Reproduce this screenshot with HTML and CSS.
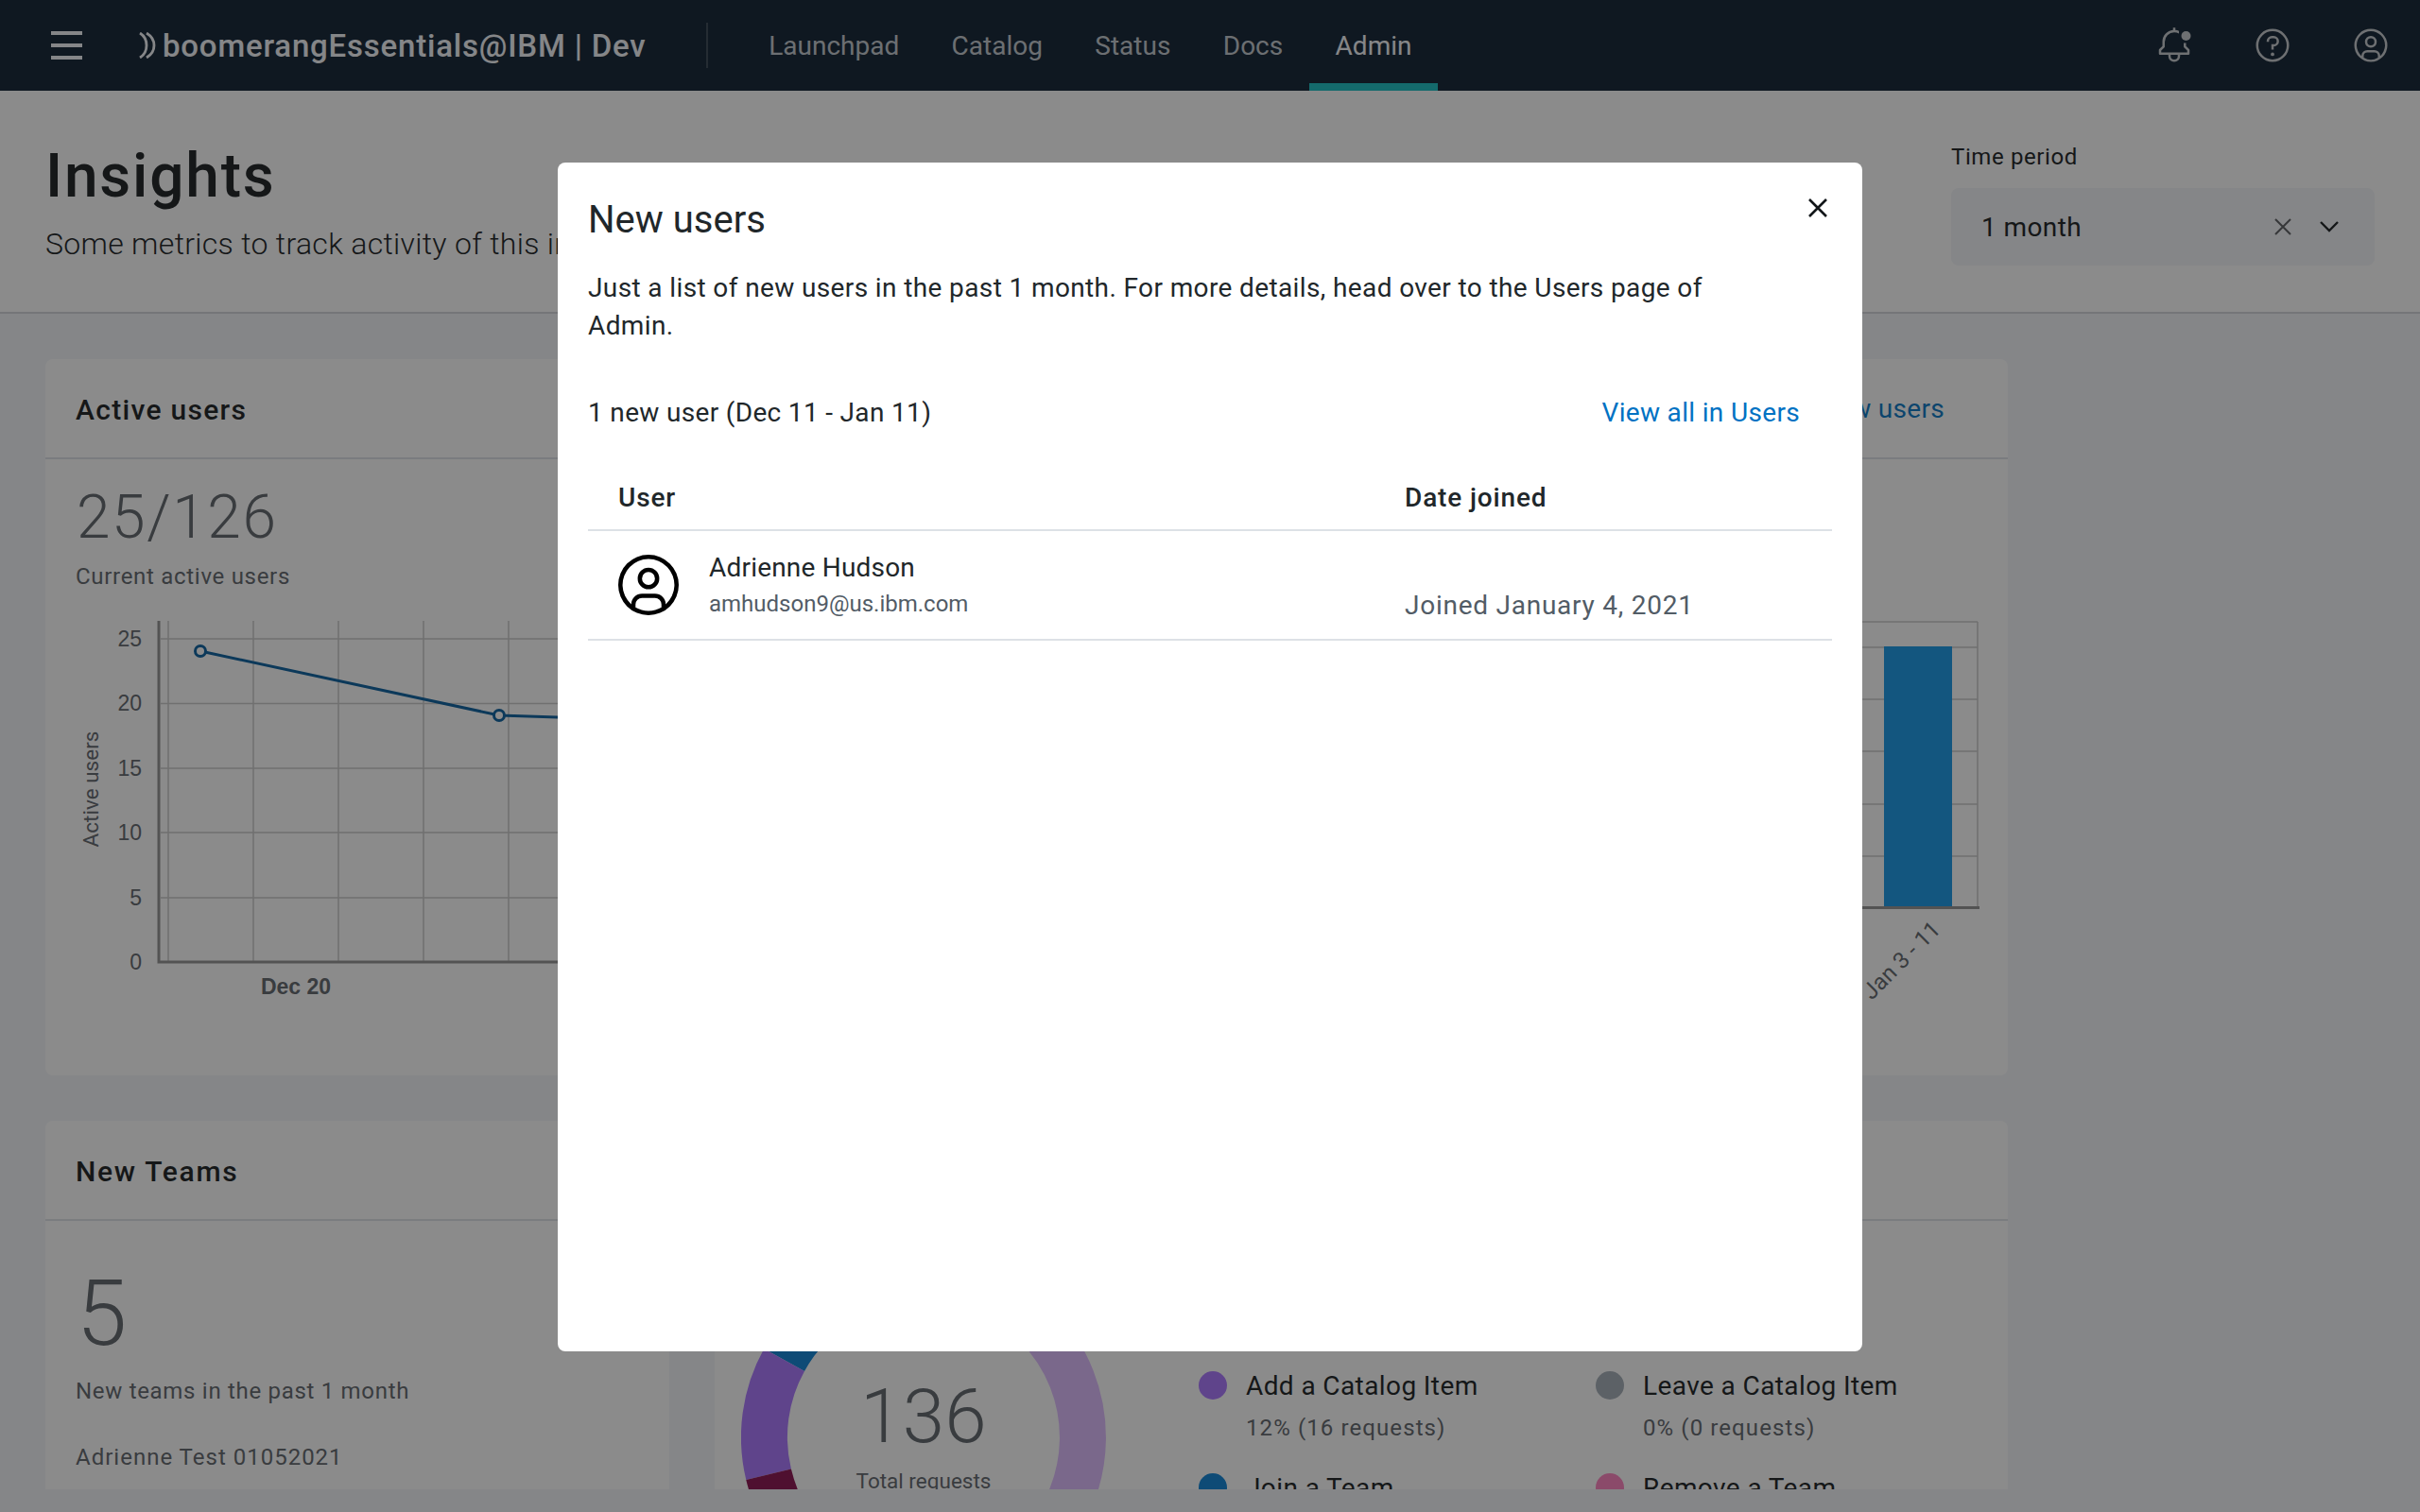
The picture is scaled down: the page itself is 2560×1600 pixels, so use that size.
FILE: index.html
```html
<!DOCTYPE html>
<html lang="en">
<head>
    <meta charset="UTF-8">
    <title>Insights - boomerangEssentials@IBM</title>
    <link rel="stylesheet" href="styles.css">
</head>
<body>
    <header class="topbar">
        <button class="menu-btn" aria-label="Menu"><span></span><span></span><span></span></button>
        <div class="brand">
            <svg class="brand-mark" viewBox="0 0 20 28" fill="none" stroke="currentColor" stroke-width="2.8">
                <path d="M2 1c5 3 7 8 7 13s-2 10-7 13"/>
                <path d="M9 1c5 3 8 8 8 13s-3 10-8 13"/>
            </svg>
            <span>boomerangEssentials@IBM | Dev</span>
        </div>
        <nav class="nav">
            <a href="#">Launchpad</a>
            <a href="#">Catalog</a>
            <a href="#">Status</a>
            <a href="#">Docs</a>
            <a href="#" class="active">Admin</a>
        </nav>
        <div class="topbar-icons">
            <svg viewBox="0 0 32 32"><path d="M26 16.59V14h-2v3a1 1 0 0 0 .29.71L27 20.41V22H5v-1.59l2.71-2.71A1 1 0 0 0 8 17v-4a8 8 0 0 1 8-8 7.9 7.9 0 0 1 4 1.09V3.82a9.88 9.88 0 0 0-3-.77V1h-2v2.05A10 10 0 0 0 6 13v3.59l-2.71 2.7A1 1 0 0 0 3 20v3a1 1 0 0 0 1 1h7v1a5 5 0 0 0 10 0v-1h7a1 1 0 0 0 1-1v-3a1 1 0 0 0-.29-.71zM19 25a3 3 0 0 1-6 0v-1h6z"/><circle cx="26" cy="8" r="4"/></svg>
            <svg viewBox="0 0 32 32"><path d="M16 2a14 14 0 1 0 14 14A14 14 0 0 0 16 2zm0 26a12 12 0 1 1 12-12 12 12 0 0 1-12 12z"/><circle cx="16" cy="23.5" r="1.5"/><path d="M17 8h-1.5a4.49 4.49 0 0 0-4.5 4.5v.5h2v-.5a2.5 2.5 0 0 1 2.5-2.5H17a2.5 2.5 0 0 1 0 5h-2v4.5h2V17a4.5 4.5 0 0 0 0-9z"/></svg>
            <svg viewBox="0 0 32 32"><path d="M16 8a5 5 0 1 0 5 5 5 5 0 0 0-5-5zm0 8a3 3 0 1 1 3-3 3.003 3.003 0 0 1-3 3z"/><path d="M16 2a14 14 0 1 0 14 14A14.016 14.016 0 0 0 16 2zm-6 24.377V25a3.003 3.003 0 0 1 3-3h6a3.003 3.003 0 0 1 3 3v1.377a11.899 11.899 0 0 1-12 0zm13.992-1.451A5.002 5.002 0 0 0 19 20h-6a5.002 5.002 0 0 0-4.992 4.926 12 12 0 1 1 15.985 0z"/></svg>
        </div>
    </header>

    <section class="page-head">
        <div>
            <h1>Insights</h1>
            <p class="page-sub">Some metrics to track activity of this instance</p>
        </div>
        <div class="period">
            <label class="period-label">Time period</label>
            <div class="select">
                <span>1 month</span>
                <svg class="select-clear" viewBox="0 0 18 18"><path d="M1 1l16 16M17 1L1 17"/></svg>
                <svg class="select-chevron" viewBox="0 0 20 12"><path d="M1 1l9 9 9-9"/></svg>
            </div>
        </div>
    </section>

    <main class="dashboard">
        <section class="card">
            <div class="card-head">
                <h2>Active users</h2>
                <a href="#" class="card-link">View new users</a>
            </div>
            <div class="active-body">
                <div>
                    <div class="stat">25/126</div>
                    <div class="stat-label">Current active users</div>
                    <svg class="line-chart" viewBox="81 640 540 430">
                        <g class="grid">
                            <path d="M170 676H621M170 744.5H621M170 813H621M170 881H621M170 950H621"/>
                            <path d="M178 657V1018M268 657V1018M358 657V1018M448 657V1018M538 657V1018"/>
                        </g>
                        <path class="axis" d="M168 657V1018H621"/>
                        <path class="series" d="M212 689L528 757L621 760"/>
                        <circle class="dot" cx="212" cy="689" r="5.5"/>
                        <circle class="dot" cx="528" cy="757" r="5.5"/>
                        <g class="ticks">
                            <text x="150" y="684">25</text>
                            <text x="150" y="752">20</text>
                            <text x="150" y="821">15</text>
                            <text x="150" y="889">10</text>
                            <text x="150" y="958">5</text>
                            <text x="150" y="1026">0</text>
                        </g>
                        <text class="tick-bold" x="313" y="1052">Dec 20</text>
                        <text class="axis-title" transform="translate(104 835) rotate(-90)">Active users</text>
                    </svg>
                </div>
                <svg class="bar-chart" viewBox="1824 640 300 430">
                    <path class="grid" d="M1824 684H2092M1824 739H2092M1824 794H2092M1824 850H2092M1824 905H2092M1824 657H2092M2092 657V959"/>
                    <rect class="bar" x="1993" y="683" width="72" height="276"/>
                    <path class="axis" d="M1824 959.5H2094"/>
                    <text class="bar-label" transform="translate(2054 984) rotate(-45)">Jan 3 - 11</text>
                </svg>
            </div>
        </section>

        <div class="row">
            <section class="card">
                <div class="card-head"><h2>New Teams</h2></div>
                <div class="teams-body">
                    <div class="stat-big">5</div>
                    <div class="stat-label">New teams in the past 1 month</div>
                    <div class="team-name">Adrienne Test 01052021</div>
                </div>
            </section>
            <section class="card">
                <div class="card-head"><h2>Requests</h2></div>
                <div class="requests-body">
                    <div class="donut">
                        <svg viewBox="0 0 386 386" fill="none">
                            <path class="seg-lavender" d="M193 24.5A168.5 168.5 0 0 1 193 361.5"/>
                            <path class="seg-blue" d="M193 24.5A168.5 168.5 0 0 0 45.6 111.1"/>
                            <path class="seg-purple" d="M45.6 111.1A168.5 168.5 0 0 0 29.1 232.3"/>
                            <path class="seg-maroon" d="M29.1 232.3A168.5 168.5 0 0 0 193 361.5"/>
                        </svg>
                        <div class="donut-center">
                            <div class="donut-total">136</div>
                            <div class="donut-label">Total requests</div>
                        </div>
                    </div>
                    <div class="legend">
                        <div class="legend-item">
                            <span class="swatch swatch-purple"></span>
                            <div><div class="legend-name">Add a Catalog Item</div><div class="legend-value">12% (16 requests)</div></div>
                        </div>
                        <div class="legend-item">
                            <span class="swatch swatch-gray"></span>
                            <div><div class="legend-name">Leave a Catalog Item</div><div class="legend-value">0% (0 requests)</div></div>
                        </div>
                        <div class="legend-item">
                            <span class="swatch swatch-blue"></span>
                            <div><div class="legend-name">Join a Team</div><div class="legend-value">9% (12 requests)</div></div>
                        </div>
                        <div class="legend-item">
                            <span class="swatch swatch-pink"></span>
                            <div><div class="legend-name">Remove a Team</div><div class="legend-value">2% (3 requests)</div></div>
                        </div>
                    </div>
                </div>
            </section>
        </div>
    </main>

    <div class="overlay">
        <div class="modal">
            <button class="modal-close" aria-label="Close">
                <svg viewBox="0 0 20 20"><path d="M1 1l18 18M19 1L1 19"/></svg>
            </button>
            <h3 class="modal-title">New users</h3>
            <p class="modal-text">Just a list of new users in the past 1 month. For more details, head over to the Users page of Admin.</p>
            <div class="modal-summary">
                <span>1 new user (Dec 11 - Jan 11)</span>
                <a href="#">View all in Users</a>
            </div>
            <div class="user-table">
                <div class="user-row user-row-head">
                    <div>User</div>
                    <div>Date joined</div>
                </div>
                <div class="user-row">
                    <div class="user-cell">
                        <svg class="avatar" viewBox="2 2 28 28"><path d="M16 8a5 5 0 1 0 5 5 5 5 0 0 0-5-5zm0 8a3 3 0 1 1 3-3 3.003 3.003 0 0 1-3 3z"/><path d="M16 2a14 14 0 1 0 14 14A14.016 14.016 0 0 0 16 2zm-6 24.377V25a3.003 3.003 0 0 1 3-3h6a3.003 3.003 0 0 1 3 3v1.377a11.899 11.899 0 0 1-12 0zm13.992-1.451A5.002 5.002 0 0 0 19 20h-6a5.002 5.002 0 0 0-4.992 4.926 12 12 0 1 1 15.985 0z"/></svg>
                        <div>
                            <div class="user-name">Adrienne Hudson</div>
                            <div class="user-email">amhudson9@us.ibm.com</div>
                        </div>
                    </div>
                    <div class="user-date">Joined January 4, 2021</div>
                </div>
            </div>
        </div>
    </div>
</body>
</html>
```

FILE: styles.css
```css
/* General */
* {
    box-sizing: border-box;
}

body {
    margin: 0;
    height: 1600px;
    overflow: hidden;
    font-family: Roboto, "Noto Sans", sans-serif;
    color: #121619;
    background: #f2f4f8;
}

h1, h2, h3, p {
    margin: 0;
    font-weight: 400;
}

a {
    color: #0072c3;
    text-decoration: none;
}

/* Top bar */
.topbar {
    display: flex;
    align-items: center;
    height: 96px;
    padding: 0 32px 0 54px;
    background: #07192b;
    color: #f2f4f8;
}

.menu-btn {
    display: flex;
    flex-direction: column;
    gap: 9px;
    width: 33px;
    padding: 0;
    border: 0;
    background: none;
}

.menu-btn span {
    height: 4px;
    background: #f2f4f8;
}

.brand {
    display: flex;
    align-items: center;
    gap: 6px;
    width: 660px;
    margin-left: 59px;
    font-size: 33px;
    font-weight: 500;
    letter-spacing: .8px;
}

.brand-mark {
    width: 20px;
    height: 28px;
}

.nav {
    display: flex;
    align-self: stretch;
    position: relative;
    margin-left: -59px;
    padding-left: 38.5px;
}

.nav::before {
    content: "";
    position: absolute;
    left: 0;
    top: 24px;
    bottom: 24px;
    border-left: 2px solid #33414f;
}

.nav a {
    display: flex;
    align-items: center;
    padding: 8px 27.7px 0;
    font-size: 28px;
    color: #c1c7cd;
    border-bottom: 8px solid transparent;
}

.nav a.active {
    color: #f2f4f8;
    border-bottom-color: #11bdc1;
}

.topbar-icons {
    display: flex;
    gap: 64px;
    margin-left: auto;
}

.topbar-icons svg {
    width: 40px;
    height: 40px;
    fill: #c5c9cd;
}

/* Page heading */
.page-head {
    display: flex;
    justify-content: space-between;
    height: 236px;
    padding: 53px 48px 0;
    background: #fff;
    border-bottom: 2px solid #d0d3d8;
}

h1 {
    font-size: 64px;
    line-height: 76px;
    font-weight: 500;
    letter-spacing: 1.8px;
}

.page-sub {
    margin-top: 13px;
    font-size: 32px;
    line-height: 40px;
    font-weight: 300;
    letter-spacing: .3px;
}

.period {
    width: 448px;
    margin-top: 1px;
}

.period-label {
    display: block;
    font-size: 24px;
    line-height: 32px;
    letter-spacing: .6px;
}

.select {
    display: flex;
    align-items: center;
    height: 82px;
    margin-top: 17px;
    padding: 0 38px 0 32px;
    border-radius: 8px;
    background: #f2f4f8;
    font-size: 28px;
    letter-spacing: .4px;
}

.select span {
    flex: 1;
}

.select svg {
    fill: none;
    stroke: #121619;
}

.select-clear {
    width: 18px;
    height: 18px;
    stroke-width: 2;
    margin-right: 30px;
    opacity: .7;
}

.select-chevron {
    width: 20px;
    height: 12px;
    stroke-width: 2.4;
}

/* Dashboard */
.dashboard {
    display: flex;
    flex-direction: column;
    gap: 48px;
    height: 1244px;
    width: 2124px;
    padding: 48px 0 0 48px;
    overflow: hidden;
}

.card {
    flex: none;
    background: #fff;
    border-radius: 8px 8px 0 0;
}

.dashboard > .card {
    height: 758px;
    border-radius: 8px;
}

.card-head {
    display: flex;
    justify-content: space-between;
    align-items: center;
    height: 106px;
    padding: 2px 67px 0 32px;
    border-bottom: 2px solid #dde1e6;
}

h2 {
    font-size: 30px;
    font-weight: 500;
    letter-spacing: 1.3px;
}

.row h2 {
    letter-spacing: 1.7px;
}

.card-link {
    margin-top: -1px;
    font-size: 28px;
    letter-spacing: .3px;
}

.active-body {
    display: flex;
    justify-content: space-between;
    padding-left: 32px;
}

.stat {
    margin: 26px 0 0 1px;
    font-size: 64px;
    line-height: 72px;
    font-weight: 300;
    letter-spacing: 1.6px;
    color: #5a6067;
}

.stat-label {
    margin-top: 10px;
    font-size: 24px;
    line-height: 32px;
    letter-spacing: .7px;
    color: #5a6067;
}

.line-chart {
    display: block;
    width: 540px;
    height: 430px;
    margin: 14px 0 0 1px;
}

.bar-chart {
    width: 300px;
    height: 430px;
    margin-top: 155px;
}

.grid path, path.grid {
    fill: none;
    stroke: #c8c8c8;
    stroke-width: 1.5;
}

.axis {
    fill: none;
    stroke: #8f8f8f;
    stroke-width: 3;
}

.series {
    fill: none;
    stroke: #005a9c;
    stroke-width: 3;
}

.dot {
    fill: #fff;
    stroke: #005a9c;
    stroke-width: 3;
}

.ticks text {
    font-family: "Liberation Sans", sans-serif;
    font-size: 23px;
    text-anchor: end;
    fill: #5a6067;
}

.tick-bold {
    font-family: "Liberation Sans", sans-serif;
    font-size: 23px;
    font-weight: 700;
    text-anchor: middle;
    fill: #5a6067;
}

.axis-title {
    font-size: 22.5px;
    text-anchor: middle;
    fill: #5a6067;
}

.bar {
    fill: #0f95e7;
}

.bar-label {
    font-size: 24px;
    text-anchor: end;
    fill: #5a6067;
}

.row {
    display: grid;
    grid-template-columns: 660px 1368px;
    gap: 48px;
}

.row .card {
    height: 600px;
}

.teams-body {
    padding: 42px 33px;
}

.stat-big {
    font-size: 96px;
    line-height: 112px;
    font-weight: 300;
    color: #5a6067;
}

.teams-body .stat-label {
    margin-top: 10px;
    margin-left: -1px;
}

.team-name {
    margin: 38px 0 0 -1px;
    font-size: 24px;
    line-height: 32px;
    letter-spacing: 1px;
    color: #5a6067;
}

/* Donut */
.requests-body {
    display: flex;
    padding: 36px 0 0 28px;
}

.donut {
    position: relative;
    flex: none;
    width: 386px;
    height: 386px;
}

.donut svg {
    display: block;
}

.donut path {
    stroke-width: 49;
}

.seg-lavender { stroke: #ddb9ff; }
.seg-blue { stroke: #057fd5; }
.seg-purple { stroke: #a771ff; }
.seg-maroon { stroke: #870949; }

.donut-center {
    position: absolute;
    inset: 0;
    display: flex;
    flex-direction: column;
    align-items: center;
    justify-content: center;
}

.donut-total {
    margin-top: -7px;
    font-size: 80px;
    line-height: 92px;
    font-weight: 300;
    letter-spacing: .3px;
    color: #5a6067;
}

.donut-label {
    margin-top: 6px;
    font-size: 22.5px;
    line-height: 32px;
    color: #5a6067;
}

.legend {
    display: grid;
    grid-template-columns: 420px 420px;
    grid-auto-rows: 108px;
    margin: 123px 0 0 98px;
}

.legend-item {
    display: flex;
    gap: 20px;
}

.swatch {
    flex: none;
    width: 30px;
    height: 30px;
    border-radius: 50%;
}

.swatch-purple { background: #a771ff; }
.swatch-gray { background: #a1abb5; }
.swatch-blue { background: #057fd5; }
.swatch-pink { background: #ff7dbd; }

.legend-name {
    font-size: 28px;
    line-height: 32px;
    letter-spacing: .4px;
}

.legend-value {
    margin-top: 12px;
    font-size: 24px;
    line-height: 32px;
    letter-spacing: 1.1px;
    color: #5a6067;
}

/* Modal */
.overlay {
    position: fixed;
    inset: 0;
    display: flex;
    align-items: center;
    justify-content: center;
    background: rgba(23, 23, 23, .5);
}

.modal {
    position: relative;
    width: 1380px;
    height: 1258px;
    margin-top: 2px;
    padding: 36px 32px 32px;
    border-radius: 8px;
    background: #fff;
    color: #21272a;
}

.modal-close {
    position: absolute;
    top: 38px;
    right: 37px;
    width: 20px;
    height: 20px;
    padding: 0;
    border: 0;
    background: none;
}

.modal-close svg {
    display: block;
    fill: none;
    stroke: #121619;
    stroke-width: 2.6;
}

.modal-title {
    font-size: 40px;
    line-height: 50px;
}

.modal-text {
    width: 1240px;
    margin-top: 27px;
    font-size: 28px;
    line-height: 40px;
    letter-spacing: .38px;
}

.modal-summary {
    display: flex;
    justify-content: space-between;
    width: 1282px;
    margin-top: 52px;
    font-size: 28px;
    line-height: 40px;
    letter-spacing: .33px;
}

.user-table {
    margin-top: 36px;
}

.user-row {
    display: grid;
    grid-template-columns: 832px 1fr;
    padding-left: 32px;
    border-bottom: 2px solid #dde1e6;
    font-size: 28px;
}

.user-row-head {
    height: 69px;
    align-items: center;
    font-weight: 500;
    letter-spacing: .85px;
}

.user-cell {
    display: flex;
    align-items: center;
    gap: 32px;
    height: 114px;
}

.avatar {
    width: 64px;
    height: 64px;
}

.user-name {
    line-height: 36px;
    letter-spacing: .2px;
}

.user-email {
    margin-top: 4px;
    font-size: 24px;
    line-height: 32px;
    color: #525c66;
}

.user-date {
    align-self: end;
    padding-bottom: 17px;
    line-height: 36px;
    letter-spacing: .75px;
    color: #525c66;
}
```
